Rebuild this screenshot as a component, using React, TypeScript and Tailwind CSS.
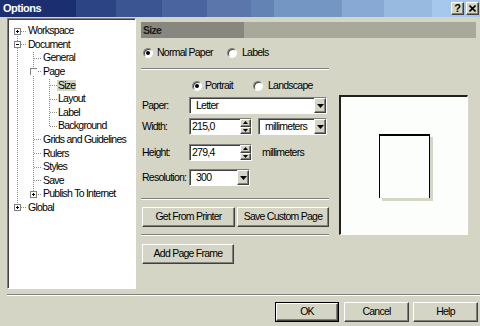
import React from "react";

const raised =
  "border border-t-white border-l-white border-b-[#404040] border-r-[#404040] shadow-[inset_-1px_-1px_0_#808080] bg-[#d4d5c4]";
const sunken =
  "border border-t-[#808080] border-l-[#808080] border-b-white border-r-white shadow-[inset_1px_1px_0_#404040]";

function Etched({ className = "" }: { className?: string }) {
  return <div className={`h-[2px] border-t border-t-[#808080] border-b border-b-white ${className}`} />;
}

function Radio({ checked }: { checked?: boolean }) {
  return (
    <span className="w-[10px] h-[10px] shrink-0 rounded-full bg-white border border-t-[#808080] border-l-[#808080] border-b-white border-r-white shadow-[inset_1px_1px_0_#404040] flex items-center justify-center">
      {checked && <span className="w-[4px] h-[4px] rounded-full bg-black" />}
    </span>
  );
}

function Down() {
  return (
    <svg width="7" height="4" viewBox="0 0 7 4">
      <polygon points="0,0 7,0 3.5,4" fill="#000" />
    </svg>
  );
}

function Up() {
  return (
    <svg width="5" height="3" viewBox="0 0 5 3">
      <polygon points="0,3 5,3 2.5,0" fill="#000" />
    </svg>
  );
}

function SmallDown() {
  return (
    <svg width="5" height="3" viewBox="0 0 5 3">
      <polygon points="0,0 5,0 2.5,3" fill="#000" />
    </svg>
  );
}

function Combo({ value, className = "" }: { value: string; className?: string }) {
  return (
    <div className={`flex h-[17px] bg-white ${sunken} ${className}`}>
      <span className="flex-1 pl-[6px] leading-[15px] whitespace-nowrap overflow-hidden">{value}</span>
      <span className={`w-[12px] h-[15px] flex items-center justify-center ${raised}`}>
        <Down />
      </span>
    </div>
  );
}

function Spin({ value }: { value: string }) {
  return (
    <div className={`flex h-[17px] w-[63px] bg-white ${sunken}`}>
      <span className="flex-1 pl-[2px] leading-[15px]">{value}</span>
      <span className="w-[11px] h-[15px] flex flex-col">
        <span className={`flex-1 flex items-center justify-center ${raised}`}>
          <Up />
        </span>
        <span className={`flex-1 flex items-center justify-center ${raised}`}>
          <SmallDown />
        </span>
      </span>
    </div>
  );
}

function Btn({ label, className = "" }: { label: string; className?: string }) {
  return (
    <div className={`h-[20px] flex items-center justify-center ${raised} ${className}`}>{label}</div>
  );
}

const treeRows: { label: string; level: number; sel?: boolean }[] = [
  { label: "Workspace", level: 0 },
  { label: "Document", level: 0 },
  { label: "General", level: 1 },
  { label: "Page", level: 1 },
  { label: "Size", level: 2, sel: true },
  { label: "Layout", level: 2 },
  { label: "Label", level: 2 },
  { label: "Background", level: 2 },
  { label: "Grids and Guidelines", level: 1 },
  { label: "Rulers", level: 1 },
  { label: "Styles", level: 1 },
  { label: "Save", level: 1 },
  { label: "Publish To Internet", level: 1 },
  { label: "Global", level: 0 },
];

const cy = (i: number) => Math.floor(31 + 13.6 * i) + 0.5;

function Box({ x, i, plus, minus }: { x: number; i: number; plus?: boolean; minus?: boolean }) {
  const y = cy(i);
  return (
    <g shapeRendering="crispEdges">
      <rect x={x} y={y - 3} width={6} height={6} fill="#fff" stroke="#808080" />
      {(plus || minus) && <line x1={x + 1.5} y1={y} x2={x + 4.5} y2={y} stroke="#000" />}
      {plus && <line x1={x + 3} y1={y - 1.5} x2={x + 3} y2={y + 1.5} stroke="#000" />}
    </g>
  );
}

function Tree() {
  const pads = ["pl-[19px]", "pl-[34px]", "pl-[49px]"];
  return (
    <div className={`relative w-[129px] h-[271px] bg-white ${sunken}`}>
      <svg className="absolute left-0 top-0" width={127} height={269} viewBox="8 19 127 269">
        <g stroke="#8c8c8c" strokeDasharray="1 1" shapeRendering="crispEdges" fill="none">
          <line x1={17.5} y1={cy(0)} x2={17.5} y2={cy(13)} />
          {[0, 1, 13].map((i) => (
            <line key={"h0" + i} x1={21} y1={cy(i)} x2={26} y2={cy(i)} />
          ))}
          <line x1={33.5} y1={cy(2) - 7} x2={33.5} y2={cy(12)} />
          {[2, 3, 8, 9, 10, 11, 12].map((i) => (
            <line key={"h1" + i} x1={34} y1={cy(i)} x2={41} y2={cy(i)} />
          ))}
          <line x1={49.5} y1={cy(4) - 7} x2={49.5} y2={cy(7)} />
          {[4, 5, 6, 7].map((i) => (
            <line key={"h2" + i} x1={50} y1={cy(i)} x2={57} y2={cy(i)} />
          ))}
        </g>
        <Box x={14.5} i={0} plus />
        <Box x={14.5} i={1} minus />
        <Box x={14.5} i={13} plus />
        <Box x={30.5} i={12} plus />
        <g shapeRendering="crispEdges">
          <rect x={30} y={cy(3) - 3.5} width={7} height={7} fill="#fff" />
          <path d={`M30.5 ${cy(3) + 3} V${cy(3) - 3} H36.5`} stroke="#808080" fill="none" />
        </g>
      </svg>
      <div className="relative flex flex-col pt-[5.2px]">
        {treeRows.map((r) => (
          <div key={r.label} className={`h-[13.6px] leading-[13.6px] flex items-center whitespace-nowrap ${pads[r.level]}`}>
            <span className={r.sel ? "bg-[#d4d5c4] px-[1px] leading-[11px]" : "pl-[1px]"}>{r.label}</span>
          </div>
        ))}
      </div>
    </div>
  );
}

export default function App() {
  return (
    <div className="w-[480px] h-[326px] bg-[#d4d5c4] flex flex-col overflow-hidden font-['Liberation_Sans',Arial,sans-serif] text-[10.5px] tracking-[-0.75px] text-black">
      <div className="h-[17px] shrink-0 flex items-center pl-[3px] pr-[1px] bg-[linear-gradient(90deg,#1b2f70_0px,#1b2f70_76px,#2c4483_76px,#2c4483_116px,#3b5592_116px,#3b5592_162px,#4a64a0_162px,#4a64a0_207px,#5a76ab_207px,#5a76ab_251px,#6283b3_251px,#6283b3_274px,#7396c3_274px,#7396c3_342px,#87a9d4_342px,#87a9d4_384px,#98bae1_384px,#98bae1_432px,#a5c8ec_432px)]">
        <span className="flex-1 text-white font-bold text-[11px] tracking-[-0.5px]">Options</span>
        <div className={`w-[13px] h-[13px] flex items-center justify-center font-bold text-[11px] leading-none tracking-normal ${raised}`}>?</div>
        <div className={`ml-[2px] w-[13px] h-[13px] flex items-center justify-center ${raised}`}>
          <svg width="7" height="7" viewBox="0 0 7 7">
            <path d="M0.5 0.5 L6.5 6.5 M6.5 0.5 L0.5 6.5" stroke="#000" strokeWidth="1.6" />
          </svg>
        </div>
      </div>

      <div className="flex pl-[7px] pt-px h-[272px] shrink-0">
        <Tree />
        <div className="ml-[5px] w-[335px] flex flex-col pt-[4px]">
          <div className="h-[16px] flex bg-[#a8a99a]">
            <div className="w-[103px] bg-[#87877f] pl-[2px] font-bold leading-[16px] text-[#1a1a1a]">Size</div>
          </div>
          <div className="flex">
            <div className="w-[188px] flex flex-col">
              <div className="mt-[8px] h-[14px] flex items-center pl-[2px]">
                <div className="w-[84px] flex items-center gap-[4px]">
                  <Radio checked />
                  <span>Normal Paper</span>
                </div>
                <div className="flex items-center gap-[5px]">
                  <Radio />
                  <span>Labels</span>
                </div>
              </div>
              <Etched className="mt-[8px]" />
              <div className="mt-[9px] h-[14px] flex items-center pl-[51px]">
                <div className="w-[61px] flex items-center gap-[3px]">
                  <Radio checked />
                  <span>Portrait</span>
                </div>
                <div className="flex items-center gap-[5px]">
                  <Radio />
                  <span>Landscape</span>
                </div>
              </div>
              <div className="mt-[4px] h-[17px] flex items-center">
                <span className="w-[48px] pl-[1px]">Paper:</span>
                <Combo value="Letter" className="w-[138px]" />
              </div>
              <div className="mt-[4px] h-[17px] flex items-center">
                <span className="w-[48px] pl-[1px]">Width:</span>
                <Spin value="215,0" />
                <Combo value="millimeters" className="ml-[6px] w-[69px]" />
              </div>
              <div className="mt-[9px] h-[17px] flex items-center">
                <span className="w-[48px] pl-[1px]">Height:</span>
                <Spin value="279,4" />
                <span className="ml-[10px]">millimeters</span>
              </div>
              <div className="mt-[8px] h-[17px] flex items-center">
                <span className="w-[48px] pl-[1px]">Resolution:</span>
                <Combo value="300" className="w-[61px]" />
              </div>
              <Etched className="mt-[12px]" />
              <div className="mt-[7px] flex pl-[1px]">
                <Btn label="Get From Printer" className="w-[93px]" />
                <Btn label="Save Custom Page" className="ml-[2px] w-[92px]" />
              </div>
              <Etched className="mt-[7px]" />
              <div className="mt-[8px] flex pl-[1px]">
                <Btn label="Add Page Frame" className="w-[92px]" />
              </div>
            </div>
            <div className="ml-[10px] mt-[57px] w-[129px] h-[140px] bg-[#fcfefb] border-t-2 border-l-2 border-t-[#202020] border-l-[#202020] border-b border-r border-b-white border-r-white flex items-center justify-center">
              <div className="w-[51px] h-[64px] bg-[#fcfefb] border-t-2 border-x border-black shadow-[3px_3px_0_#d4d5c4]" />
            </div>
          </div>
        </div>
      </div>

      <Etched className="ml-[7px] mt-[5px]" />
      <div className="mt-[6px] flex justify-end pr-[2px]">
        <div className="w-[64px] h-[20px] border border-black flex">
          <div className={`flex-1 flex items-center justify-center ${raised}`}>OK</div>
        </div>
        <Btn label="Cancel" className="ml-[5px] w-[65px]" />
        <Btn label="Help" className="ml-[4px] w-[65px]" />
      </div>
    </div>
  );
}
